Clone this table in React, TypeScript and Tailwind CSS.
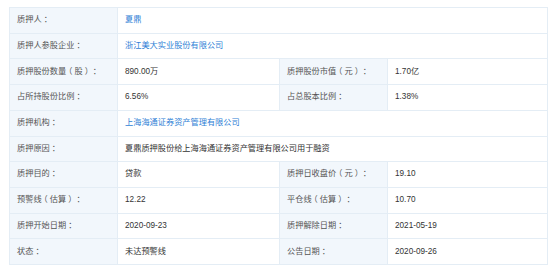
const font = { fontFamily: '"Liberation Sans", "Noto Sans CJK SC", sans-serif' };

type Cell = { text: string; link?: boolean };
type Row = [string, Cell] | [string, Cell, string, Cell];

const rows: Row[] = [
  ["质押人：", { text: "夏鼎", link: true }],
  ["质押人参股企业：", { text: "浙江美大实业股份有限公司", link: true }],
  ["质押股份数量（股）：", { text: "890.00万" }, "质押股份市值（元）：", { text: "1.70亿" }],
  ["占所持股份比例：", { text: "6.56%" }, "占总股本比例：", { text: "1.38%" }],
  ["质押机构：", { text: "上海海通证券资产管理有限公司", link: true }],
  ["质押原因：", { text: "夏鼎质押股份给上海海通证券资产管理有限公司用于融资" }],
  ["质押目的：", { text: "贷款" }, "质押日收盘价（元）：", { text: "19.10" }],
  ["预警线（估算）：", { text: "12.22" }, "平仓线（估算）：", { text: "10.70" }],
  ["质押开始日期：", { text: "2020-09-23" }, "质押解除日期：", { text: "2021-05-19" }],
  ["状态：", { text: "未达预警线" }, "公告日期：", { text: "2020-09-26" }],
];

// fullwidth punctuation: half-width glyph centred in a full em box, like the source font
function Punct({ ch }: { ch: string }) {
  return (
    <span className="inline-block w-[1em] text-center [font-feature-settings:'halt']">
      {ch}
    </span>
  );
}

function Label({ text }: { text: string }) {
  return (
    <div className="flex items-center bg-[#f2f7fc] px-[7px] text-[#555]">
      <span>
        {text
          .split("")
          .map((ch, i) => ("（）：".includes(ch) ? <Punct key={i} ch={ch} /> : ch))}
      </span>
    </div>
  );
}

function Value({ cell, wide }: { cell: Cell; wide?: boolean }) {
  return (
    <div
      className={`flex items-center bg-white px-[7px] ${wide ? "col-span-3" : ""} ${
        cell.link ? "text-[#2f7fd6]" : "text-[#333]"
      }`}
    >
      {cell.text}
    </div>
  );
}

export default function App() {
  return (
    <div className="h-[272px] w-[550px] bg-white pl-[9px] pt-[7px]" style={font}>
      <div className="grid h-[258px] w-[539px] grid-cols-[107px_161px_107px_159px] grid-rows-[repeat(10,minmax(0,1fr))] gap-px bg-[#e4edf5] p-px text-[8.2px] leading-none">
        {rows.map((r, i) =>
          r.length === 2 ? (
            <div key={i} className="contents">
              <Label text={r[0]} />
              <Value cell={r[1]} wide />
            </div>
          ) : (
            <div key={i} className="contents">
              <Label text={r[0]} />
              <Value cell={r[1]} />
              <Label text={r[2]} />
              <Value cell={r[3]} />
            </div>
          )
        )}
      </div>
    </div>
  );
}
